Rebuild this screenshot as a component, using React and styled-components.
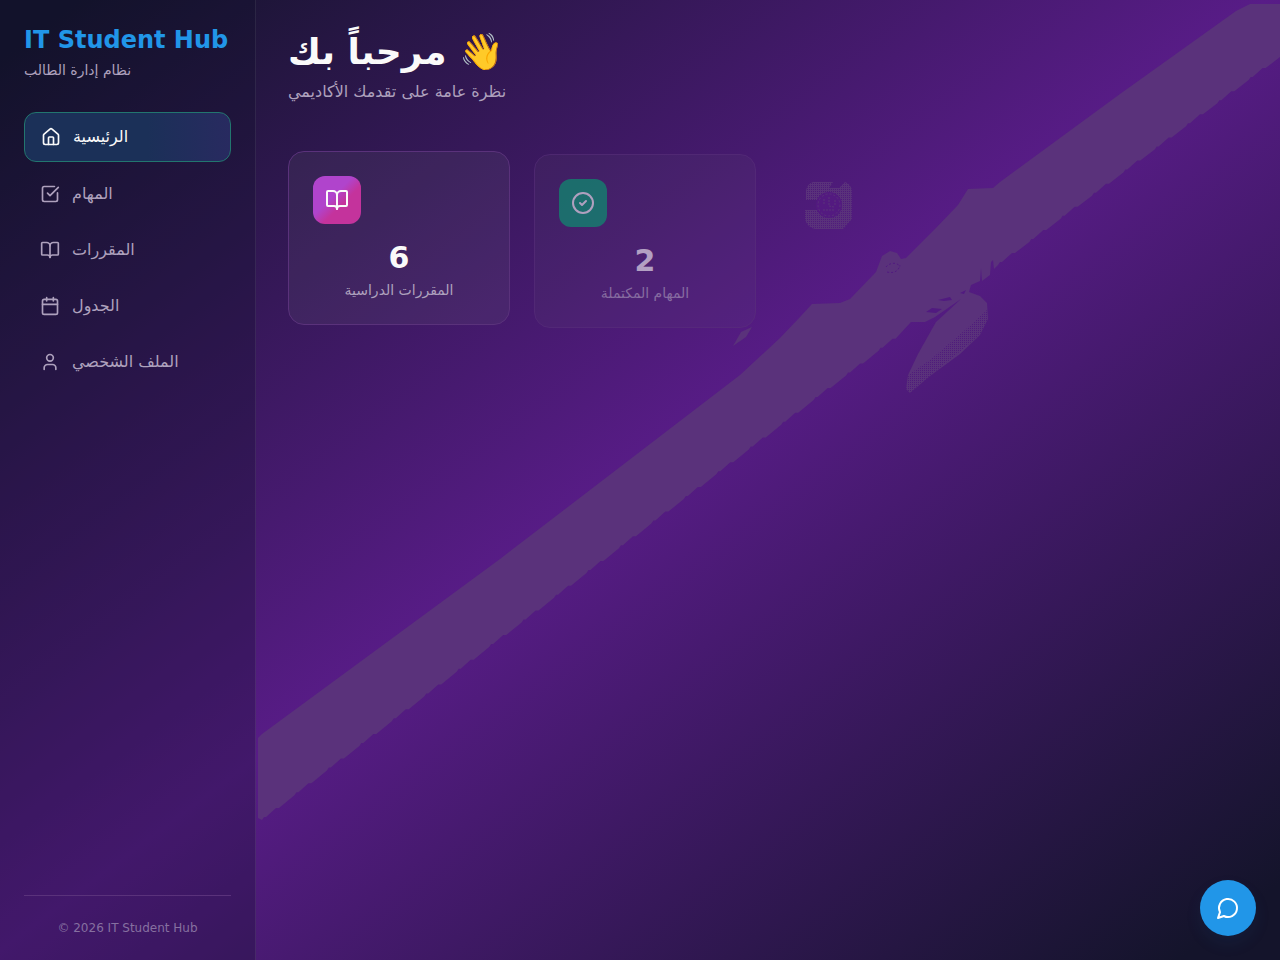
import React from 'react'
import styled, { createGlobalStyle } from "styled-components"
import { House, SquareCheckBig, BookOpen, Calendar, User, CircleCheck } from "lucide-react";

const GlobalStyle = createGlobalStyle`
    * {
        box-sizing: border-box;
    }

    body {
        margin: 0;
        color: #fafafa;
        font-family: "DejaVu Sans", sans-serif;
        font-size: 16px;
        line-height: 24px;
    }
`;

const Layout = styled.div`
    display: flex;
    min-height: 100vh;
    background: linear-gradient(to bottom right, #14142b 3%, #581c87, #14142b 96%);
`;

const Sidebar = styled.aside`
    display: flex;
    flex-direction: column;
    flex: 0 0 256px;
    padding: 24px;
    background: rgba(18, 18, 43, 0.3);
    border-right: solid 1px rgba(255, 255, 255, 0.08);
`;

const Brand = styled.div`
    margin-bottom: 32px;
    font-size: 24px;
    line-height: 32px;
    font-weight: 700;
    color: #2196e8;
    white-space: nowrap;
`;

const Tagline = styled.div`
    font-size: 14px;
    line-height: 20px;
    font-weight: 400;
    color: #aea1bd;
    margin-top: 4px;
`;

const Nav = styled.nav`
    display: flex;
    flex-direction: column;
    flex: 1;
    gap: 8px;
`;

const NavLink = styled.a`
    display: flex;
    align-items: center;
    gap: 12px;
    padding: 12px 16px;
    border: ${({ $active }) => $active ? 'solid 1px #22766f' : 'none'};
    border-radius: 12px;
    background: ${({ $active }) => $active ? 'linear-gradient(to right, #1b3058 60%, #282a60)' : 'transparent'};
    color: ${({ $active }) => $active ? '#fafafa' : '#aea1bd'};
    text-decoration: none;
`;

const SidebarFooter = styled.footer`
    padding-top: 24px;
    border-top: solid 1px #5a327b;
    font-size: 12px;
    line-height: 16px;
    text-align: center;
    color: #8670a0;
`;

const Main = styled.main`
    position: relative;
    flex: 1;
    min-width: 0;
    padding: 32px;
`;

const Streak = styled.svg`
    position: absolute;
    inset: 0;
    width: 100%;
    height: 100%;
    pointer-events: none;
`;

const Header = styled.header`
    position: relative;
    margin-bottom: 47px;
`;

const Title = styled.h1`
    margin: 0 0 8px;
    font-size: 36px;
    line-height: 40px;
    font-weight: 700;
`;

const Subtitle = styled.p`
    margin: 0;
    color: #aea1bd;
`;

const Stats = styled.section`
    position: relative;
    display: grid;
    grid-template-columns: repeat(4, 1fr);
    align-items: start;
    gap: 24px;

    @media screen and (max-width: 900px){
        grid-template-columns: repeat(2, 1fr);
    }
`;

const Card = styled.article`
    padding: 24px;
    margin-top: ${({ $entering }) => $entering ? '3px' : '0'};
    opacity: ${({ $entering }) => $entering ? 0.6 : 1};
    border: solid 1px #5a327b;
    border-radius: 16px;
    background: rgba(110, 110, 120, 0.15);
    text-align: center;
`;

const IconTile = styled.div`
    display: flex;
    align-items: center;
    justify-content: center;
    width: 48px;
    height: 48px;
    margin-bottom: 16px;
    border-radius: 12px;
    background: ${({ $fill }) => $fill};
`;

const Value = styled.div`
    margin-bottom: 4px;
    font-size: 30px;
    line-height: 36px;
    font-weight: 700;
`;

const Label = styled.div`
    font-size: 14px;
    line-height: 20px;
    color: #aea1bd;
`;

const PendingCard = styled.div`
    padding: 31px 25px;
`;

const ChatButton = styled.button`
    position: fixed;
    right: 24px;
    bottom: 24px;
    display: flex;
    align-items: center;
    justify-content: center;
    width: 56px;
    height: 56px;
    padding: 0;
    border: none;
    border-radius: 50%;
    background: #2196e8;
    color: #ffffff;
    box-shadow: 0 8px 16px rgba(33, 100, 170, 0.1);
    cursor: pointer;
`;

const navItems = [
    { label: 'الرئيسية', icon: House, active: true },
    { label: 'المهام', icon: SquareCheckBig },
    { label: 'المقررات', icon: BookOpen },
    { label: 'الجدول', icon: Calendar },
    { label: 'الملف الشخصي', icon: User },
];

const stats = [
    { value: 6, label: 'المقررات الدراسية', icon: BookOpen, fill: 'linear-gradient(135deg, #b044cc 42%, #c4339c 60%)' },
    { value: 2, label: 'المهام المكتملة', icon: CircleCheck, fill: '#06a572', entering: true },
];

// lower edge of the streak is ragged, one notch every 32px or so
const ragged = (x1, y1, x2, y2) => {
    const count = Math.round(Math.abs(x2 - x1) / 32);
    let d = '';
    for (let i = 1; i <= count; i++) {
        const x = x1 + ((x2 - x1) * i) / count;
        const y = y1 + ((y2 - y1) * i) / count;
        d += `L${x + 17} ${y - 12}L${x + 14} ${y - 12}L${x + 4} ${y - 3}L${x + 2} ${y - 3}L${x} ${y}`;
    }
    return d;
};

const streakPath = 'M258 738L262 734L500 559L740 375L780 338L800 317L812 304L840 303L850 299L876 272L882 256L890 251L897 253L901 259L906 258L935 229L958 205L968 189L993 188L1000 182L1120 94L1236 11L1250 4L1280 4L1280 57'
    + ragged(1280, 57, 998, 265)
    + 'L994 269L993 260L991 262L990 275L982 281L981 268L980 281L971 285L969 292L980 296L987 303L988 319L980 335L960 354L930 376L910 393L906 389L908 375L918 354L936 322L948 311L961 299L935 317L925 322L911 322'
    + ragged(911, 326, 262, 820)
    + 'L258 818Z';

const PendingIcon = () => (
    <svg width="48" height="48" viewBox="0 0 48 48" aria-hidden="true">
        <defs>
            <pattern id="grain" width="2" height="2" patternUnits="userSpaceOnUse">
                <path d="M0 0h1v1h-1zM1 1h1v1h-1zM1 0h1v1h-1z" fill="#5a327b" />
            </pattern>
        </defs>
        <path d="M8 0H28L24 6H34L40 0Q46 2 47 9V37L38 47H10Q2 45 0 37V28H12V18H1V9Q2 2 8 0Z" fill="url(#grain)" />
        <circle cx="24" cy="23" r="13" fill="#531a80" />
        <circle cx="24" cy="23" r="11" fill="none" stroke="#5a327b" strokeDasharray="2 2" />
        <path d="M19 17v6M24 15v9l5 1M18 28h11M30 18v6" fill="none" stroke="#5a327b" strokeDasharray="2 1" />
    </svg>
);

const ChatIcon = () => (
    <svg width="24" height="24" viewBox="0 0 24 24" fill="none" stroke="currentColor" strokeWidth="2" strokeLinecap="round" strokeLinejoin="round" aria-hidden="true">
        <path d="M7.9 20A9 9 0 1 0 4 16.1L2 22Z" />
    </svg>
);

const App = () => {

  return (
    <Layout>
        <GlobalStyle />
        <Sidebar>
            <Brand>
                IT Student Hub
                <Tagline>نظام إدارة الطالب</Tagline>
            </Brand>
            <Nav>
                {navItems.map(({ label, icon: Icon, active }) => (
                    <NavLink key={label} href="#" $active={active}>
                        <Icon size={20} />
                        {label}
                    </NavLink>
                ))}
            </Nav>
            <SidebarFooter>© 2026 IT Student Hub</SidebarFooter>
        </Sidebar>
        <Main>
            <Streak viewBox="256 0 1024 960" preserveAspectRatio="none" aria-hidden="true">
                <defs>
                    <pattern id="dots" width="2" height="2" patternUnits="userSpaceOnUse">
                        <path d="M0 0h1v1h-1z" fill="#4f1b7b" />
                    </pattern>
                </defs>
                <path d={streakPath} fill="#5a327b" />
                <path d="M733 346L741 332L752 327L746 337Z" fill="#5a327b" />
                <path d="M987 310L988 322L980 335L930 376L910 393L906 389L908 375L930 360L965 330Z" fill="url(#dots)" />
                <path d="M886 267c4-5 12-5 14 0M887 272c8 2 12-2 13-7" fill="none" stroke="#511a80" strokeDasharray="2 2" />
                <path d="M926 312l6-4 10 1-6 4zM938 300l12-3 2 3-8 1zM960 293l6-3-2 4z" fill="#511a80" />
            </Streak>
            <Header>
                <Title>مرحباً بك 👋</Title>
                <Subtitle>نظرة عامة على تقدمك الأكاديمي</Subtitle>
            </Header>
            <Stats>
                {stats.map(({ value, label, icon: Icon, fill, entering }) => (
                    <Card key={label} $entering={entering}>
                        <IconTile $fill={fill}><Icon size={24} /></IconTile>
                        <Value>{value}</Value>
                        <Label>{label}</Label>
                    </Card>
                ))}
                <PendingCard><PendingIcon /></PendingCard>
            </Stats>
        </Main>
        <ChatButton aria-label="Chat"><ChatIcon /></ChatButton>
    </Layout>
  )
}

export default App
